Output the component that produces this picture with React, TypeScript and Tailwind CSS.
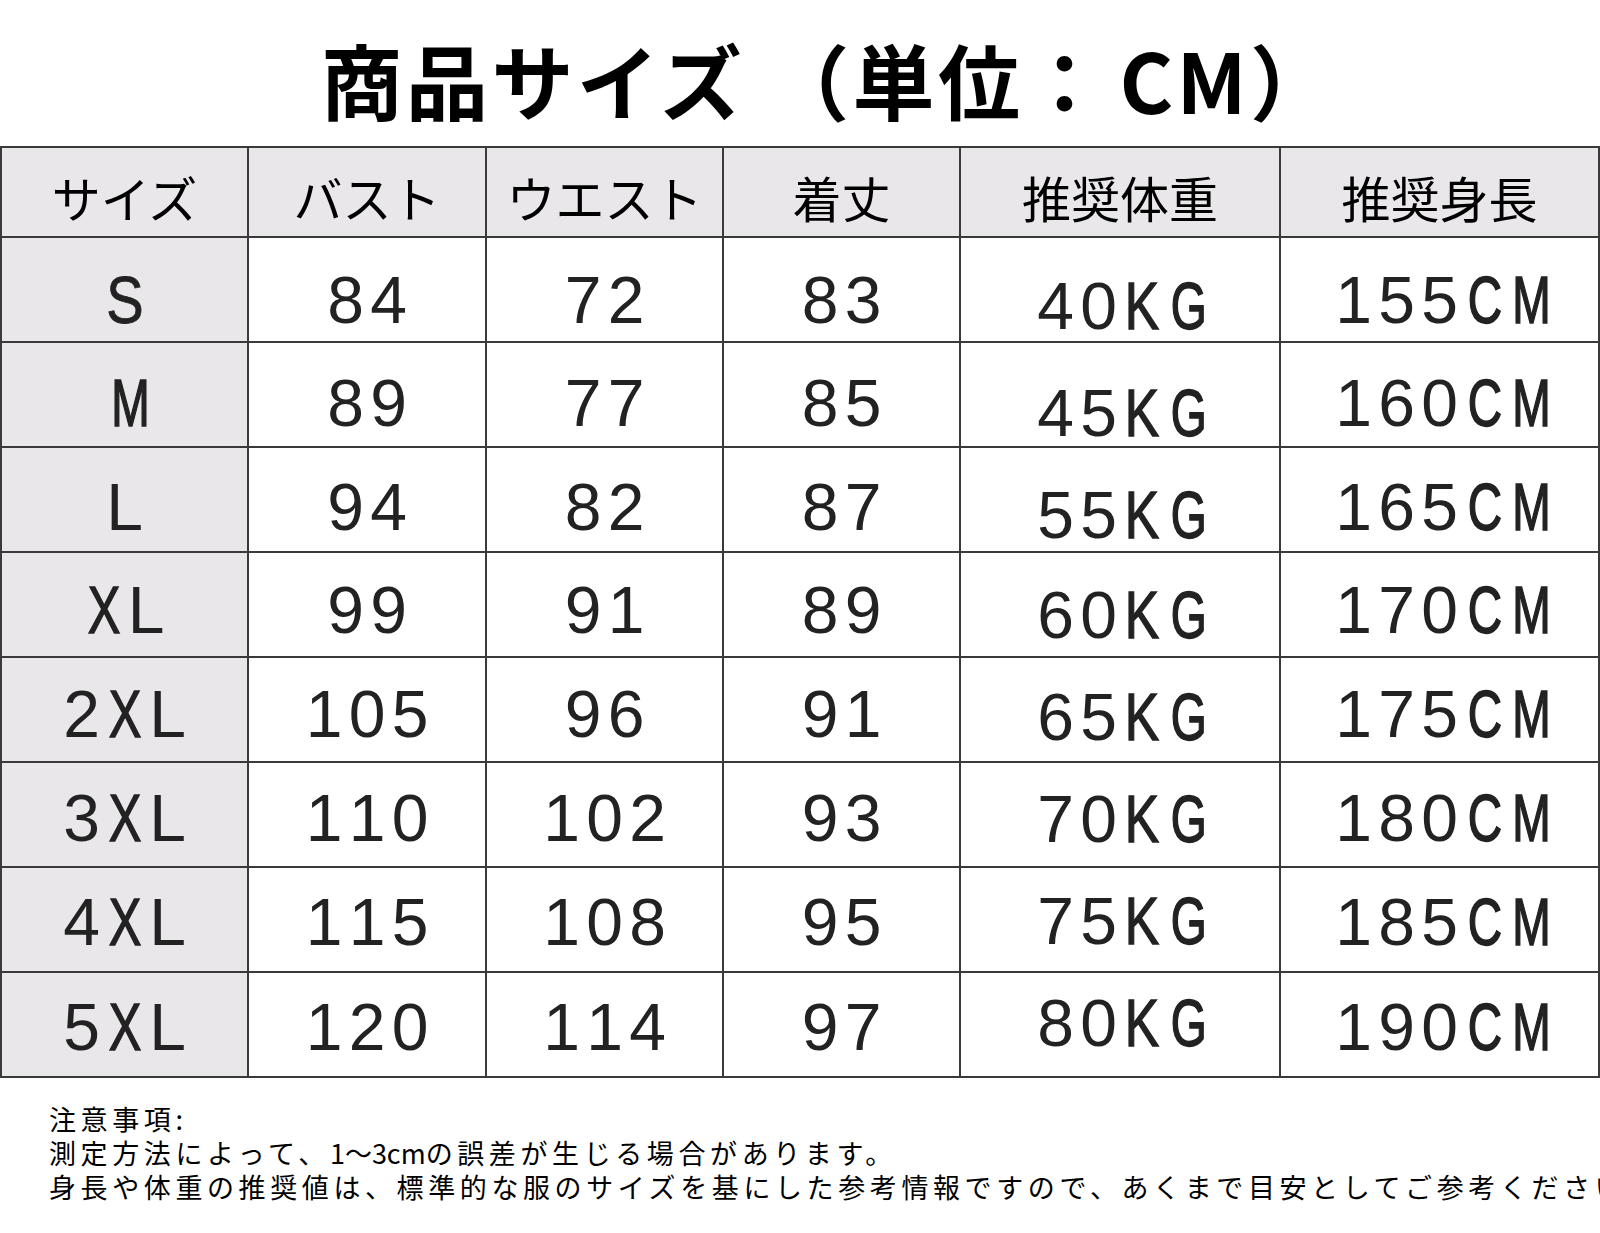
/**
 * 商品サイズ表 — サイズ別の寸法と推奨体重・身長、注意事項。
 */
import clsx from "clsx";

const HEADERS = ["サイズ", "バスト", "ウエスト", "着丈", "推奨体重", "推奨身長"];

type SizeRow = {
  size: string;
  bust: string;
  waist: string;
  length: string;
  weight: string;
  height: string;
  // 元画像は行ごとに数字の縦位置が少しずつずれている
  numPad: string;
  kgPad: string;
};

const ROWS: SizeRow[] = [
  { size: "S", bust: "84", waist: "72", length: "83", weight: "40KG", height: "155CM", numPad: "pt-[21px]", kgPad: "pt-[33px]" },
  { size: "M", bust: "89", waist: "77", length: "85", weight: "45KG", height: "160CM", numPad: "pt-[17px]", kgPad: "pt-[37px]" },
  { size: "L", bust: "94", waist: "82", length: "87", weight: "55KG", height: "165CM", numPad: "pt-[15px]", kgPad: "pt-[31px]" },
  { size: "XL", bust: "99", waist: "91", length: "89", weight: "60KG", height: "170CM", numPad: "pt-[11px]", kgPad: "pt-[21px]" },
  { size: "2XL", bust: "105", waist: "96", length: "91", weight: "65KG", height: "175CM", numPad: "pt-[9px]", kgPad: "pt-[15px]" },
  { size: "3XL", bust: "110", waist: "102", length: "93", weight: "70KG", height: "180CM", numPad: "pt-[7px]", kgPad: "pt-[9px]" },
  { size: "4XL", bust: "115", waist: "108", length: "95", weight: "75KG", height: "185CM", numPad: "pt-[5px]", kgPad: "pt-[3px]" },
  { size: "5XL", bust: "120", waist: "114", length: "97", weight: "80KG", height: "190CM", numPad: "pt-[5px]", kgPad: "pb-[3px]" },
];

/** 英字は細長い書体に見せるため横方向に縮め、線の細りをストロークで補う */
const SQUEEZE: Record<string, string> = {
  C: "scale-x-[0.72] [-webkit-text-stroke:1.6px_#222]",
  M: "scale-x-[0.7] [-webkit-text-stroke:1.6px_#222]",
  K: "scale-x-[0.78] [-webkit-text-stroke:1.4px_#222]",
  G: "scale-x-[0.7] [-webkit-text-stroke:1.6px_#222]",
  X: "scale-x-[0.74] [-webkit-text-stroke:1.4px_#222]",
  S: "scale-x-[0.85] [-webkit-text-stroke:0.8px_#222]",
};

function MonoText({ text }: { text: string }) {
  return (
    <span className="flex">
      {text.split("").map((ch, i) => (
        <span key={i} className="inline-block w-[43px] text-center">
          <span className={clsx("inline-block", SQUEEZE[ch])}>{ch}</span>
        </span>
      ))}
    </span>
  );
}

function ValueCell({ text, pad, gray }: { text: string; pad: string; gray?: boolean }) {
  return (
    <div
      className={clsx(
        "flex items-center justify-center font-['Liberation_Sans',Arial,sans-serif] text-[66px] leading-none text-[#222]",
        gray ? "bg-[#e9e7ea]" : "bg-white",
        pad,
      )}
    >
      <MonoText text={text} />
    </div>
  );
}

export default function App() {
  return (
    <div className="h-[1233px] w-[1600px] overflow-hidden bg-white font-['Noto_Sans_CJK_JP',sans-serif] text-black">
      {/* タイトル */}
      <h1 className="h-[146px] pl-[56px] pt-[38px] text-center text-[82px] font-bold leading-none tracking-[3.4px]">
        商品サイズ （単位<span className="tracking-[14px]">：</span>CM）
      </h1>

      {/* サイズ表 — 罫線はgapと背景色で描く */}
      <div className="grid grid-cols-[245px_236px_235px_235px_318px_317px] grid-rows-[88px_repeat(8,103px)] gap-[2px] bg-[#3a3a3a] p-[2px]">
        {HEADERS.map((h) => (
          <div
            key={h}
            className="flex items-center justify-center bg-[#e9e7ea] pt-[8px] text-[49px] leading-none"
          >
            {h}
          </div>
        ))}
        {ROWS.map((r) => (
          <div key={r.size} className="contents">
            <ValueCell text={r.size} pad={r.numPad} gray />
            <ValueCell text={r.bust} pad={r.numPad} />
            <ValueCell text={r.waist} pad={r.numPad} />
            <ValueCell text={r.length} pad={r.numPad} />
            <ValueCell text={r.weight} pad={r.kgPad} />
            <ValueCell text={r.height} pad={r.numPad} />
          </div>
        ))}
      </div>

      {/* 注意事項 */}
      <div className="mt-[24px] whitespace-nowrap pl-[49px] text-[27px] leading-[34px] tracking-[4.6px]">
        <p>注意事項:</p>
        <p>
          測定方法によって、<span className="tracking-normal">1〜3cm</span>の誤差が生じる場合があります。
        </p>
        <p>身長や体重の推奨値は、標準的な服のサイズを基にした参考情報ですので、あくまで目安としてご参考ください。</p>
      </div>
    </div>
  );
}
